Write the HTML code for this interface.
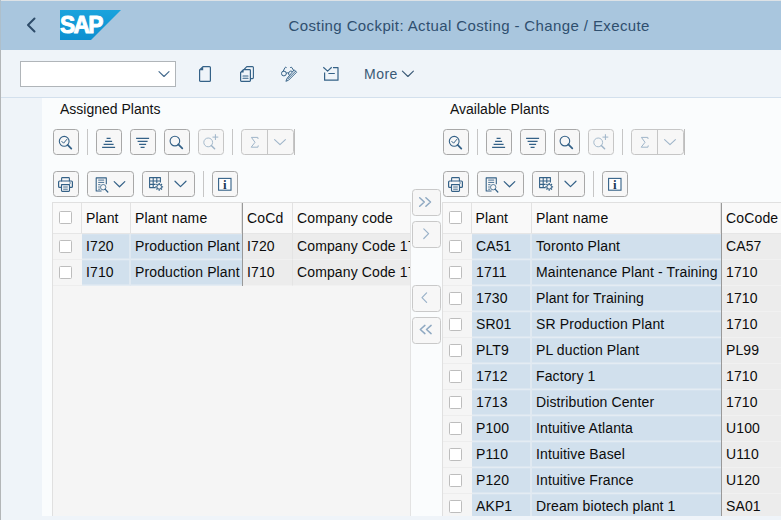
<!DOCTYPE html>
<html>
<head>
<meta charset="utf-8">
<title>Costing Cockpit: Actual Costing - Change / Execute</title>
<style>
*{box-sizing:border-box;margin:0;padding:0}
html,body{width:781px;height:520px;overflow:hidden}
body{position:relative;background:#eff4f9;font-family:"Liberation Sans",sans-serif;font-size:14px;color:#32363a}
.abs{position:absolute}
#hdr{left:0;top:0;width:781px;height:50px;background:#a9c6de}
#topline{left:0;top:0;width:781px;height:1px;background:#dde2e6}
#leftline{left:0;top:0;width:1px;height:520px;background:linear-gradient(#aebfcb 0,#aebfcb 50px,#b3b6b8 50px)}
#title{left:288.5px;top:15.5px;font-size:15px;line-height:20px;color:#2f4f6f;white-space:nowrap;letter-spacing:0.39px}
#tb{left:1px;top:50px;width:780px;height:48px;background:#eff4f9;border-bottom:1px solid #d3e0ed}
#cmd{left:20px;top:61px;width:156px;height:26px;background:#fff;border:1px solid #b0b5b9}
#more{left:364px;top:65px;font-size:14px;line-height:18px;color:#3a5976;letter-spacing:0.5px}
#panel{left:42px;top:98px;width:739px;height:418px;background:#fafcfd}
.ttl{font-size:14px;line-height:18px;color:#111;white-space:nowrap}
.btn{position:absolute;height:26px;border:1px solid #a8a8a8;border-radius:3.5px;background:#f7f7f7}
.btn.dis{border-color:#c6c6c6}
.btn.lt{border-color:#c9c9c9}
.sep{position:absolute;width:1px;height:26px;background:#c6c6c6}
.dv{position:absolute;top:0;width:1px;height:24px;background:#a6a6a6}
.dis .dv{background:#c6c6c6}
.tbl{position:absolute;background:#f5f5f5;border-left:1px solid #e0e0e0;border-top:1px solid #e0e0e0;overflow:hidden}
.tbl.l{border-right:1px solid #e3e3e3}
.row{position:absolute;left:0;height:26px;width:100%}
.cell{position:absolute;top:0;height:26px;line-height:24px;white-space:nowrap;overflow:hidden;padding-left:4px;letter-spacing:0.12px;color:#0c0c0c}
.hc{position:absolute;top:0;height:30px;line-height:30px;white-space:nowrap;overflow:hidden;padding-left:4px;background:#f9f9f9;border-right:1px solid #e2e2e2;letter-spacing:0.15px;color:#0c0c0c}
.k{background:#d1e0ed;border-right:2px solid #e0e9f1;border-bottom:1px solid #e4ecf3;box-shadow:inset 0 -1px 0 #dbe6f0,inset 0 1px 0 #d6e3ef}
.g{background:#ececec;border-right:1px solid #e4e4e4;border-bottom:1px solid #f1f1f1}
.c{background:#f5f5f5;border-bottom:1px solid #ededed}
.f{padding-left:5px}
.h{padding-left:4.5px}
.kl{border-right-width:0}
.fx{position:absolute;top:0;width:1px;background:#999}
.cb{position:absolute;width:13px;height:13px;border:1px solid #bdbdbd;border-radius:1.5px;background:#fff}
svg{position:absolute;overflow:visible}
</style>
</head>
<body>
<div id="hdr" class="abs"></div>
<div id="topline" class="abs"></div>
<div id="tb" class="abs"></div>
<div id="panel" class="abs"></div>
<div id="leftline" class="abs"></div>
<svg style="left:26px;top:17px" width="10" height="16" viewBox="0 0 10 16" ><path d="M8.5 1.5 L2 8 L8.5 14.5" fill="none" stroke="#2d4b69" stroke-width="2" stroke-linecap="round" stroke-linejoin="round"/></svg>
<svg style="left:60px;top:10px" width="61" height="30" viewBox="0 0 61 30" ><defs><linearGradient id="sg" x1="0" y1="0" x2="0" y2="1"><stop offset="0" stop-color="#1aa3dd"/><stop offset="1" stop-color="#0d8fd0"/></linearGradient></defs><path d="M0 0 H61 L31 30 H0 Z" fill="url(#sg)"/><text transform="translate(0.1,23.4) scale(0.925,1)" font-family="Liberation Sans, sans-serif" font-weight="bold" font-size="24.6" fill="#fff" stroke="#fff" stroke-width="1" stroke-linejoin="round" letter-spacing="-1.9">SAP</text></svg>
<div id="title" class="abs">Costing Cockpit: Actual Costing - Change / Execute</div>
<div id="cmd" class="abs"></div>
<svg style="left:158px;top:70px" width="12" height="8" viewBox="0 0 12 8" ><path d="M1 1.6 L6 6.5 L11 1.6" fill="none" stroke="#446a8d" stroke-width="1.15" stroke-linecap="round" stroke-linejoin="round"/></svg>
<svg style="left:199px;top:66px" width="12" height="16" viewBox="0 0 12 16" ><path d="M4 0.6 H10.4 Q11.4 0.6 11.4 1.6 V14.4 Q11.4 15.4 10.4 15.4 H1.6 Q0.6 15.4 0.6 14.4 V4 Z" fill="none" stroke="#346187" stroke-width="1.2" stroke-linecap="round" stroke-linejoin="round"/><path d="M4.2 0.6 V4.2 H0.6 Z" fill="#346187"/></svg>
<svg style="left:240px;top:66px" width="14" height="16" viewBox="0 0 14 16" ><path d="M4.5 3 L6.8 0.6 H12.4 Q13.4 0.6 13.4 1.6 V11.6 Q13.4 12.6 12.4 12.6 H11" fill="none" stroke="#346187" stroke-width="1.1" stroke-linecap="round" stroke-linejoin="round"/><path d="M3.4 3.6 H9.6 Q10.4 3.6 10.4 4.4 V14.6 Q10.4 15.4 9.6 15.4 H1.4 Q0.6 15.4 0.6 14.6 V6.4 Z" fill="none" stroke="#346187" stroke-width="1.2" stroke-linecap="round" stroke-linejoin="round"/><path d="M3.6 3.6 V6.6 H0.6 Z" fill="#346187"/><path d="M3 10 H8 M3 12.3 H8" fill="none" stroke="#346187" stroke-width="1.1" stroke-linecap="round" stroke-linejoin="round"/></svg>
<svg style="left:281px;top:66px" width="16" height="16" viewBox="0 0 16 16" ><circle cx="2.9" cy="7.5" r="2.4" fill="none" stroke="#346187" stroke-width="1"/><path d="M5.3 7.1 Q6.5 6.2 7.7 7.1 M7.8 8.6 A2.5 2.5 0 0 1 11.2 5.3 M2.1 5.2 L4.1 1.5 Q4.6 0.8 5.3 1.4 M9.5 1.4 Q10.2 0.8 10.8 1.5 L12.6 4.4" fill="none" stroke="#346187" stroke-width="1.0" stroke-linecap="round" stroke-linejoin="round"/><path d="M13.5 4.1 L15.6 6.2 L7.6 14.2 L4.9 15.3 L6 12.6 Z M14.5 5.2 L6.8 12.9" fill="none" stroke="#346187" stroke-width="0.95" stroke-linecap="round" stroke-linejoin="round"/></svg>
<svg style="left:323px;top:67px" width="16" height="14" viewBox="0 0 16 14" ><path d="M0.3 0.3 L4.6 4.1 L8.7 0.3 M10 0.6 H15 V13.2 H1.6 V5.4 M5.4 6.5 H11.8" fill="none" stroke="#346187" stroke-width="1.2" stroke-linecap="butt" stroke-linejoin="round"/></svg>
<div id="more" class="abs">More</div>
<svg style="left:401px;top:70px" width="13" height="8" viewBox="0 0 13 8" ><path d="M1.4 1.1 L6.9 6.5 L12.4 1.1" fill="none" stroke="#3a5976" stroke-width="1.1" stroke-linecap="round" stroke-linejoin="round"/></svg>
<div class="abs ttl" style="left:60px;top:100px">Assigned Plants</div>
<div class="abs ttl" style="left:450px;top:100px">Available Plants</div>
<div class="btn" style="left:53px;top:129px;width:26px"></div><svg style="left:53px;top:129px" width="26" height="26" viewBox="0 0 26 26" ><circle cx="11.2" cy="12.3" r="4.9" fill="none" stroke="#346187" stroke-width="1.10"/><path d="M14.62 15.81 L18.3 19.6" fill="none" stroke="#346187" stroke-width="1.7550000000000001" stroke-linecap="round" stroke-linejoin="round"/><path d="M8.8 12.4 L10.6 14.2 L13.8 10.4" fill="none" stroke="#346187" stroke-width="1.0" stroke-linecap="round" stroke-linejoin="round"/></svg><div class="sep" style="left:87px;top:129px"></div><div class="btn" style="left:96px;top:129px;width:26px"></div><svg style="left:96px;top:129px" width="26" height="26" viewBox="0 0 26 26" ><path d="M10.6 9.4 H14.6 M9.1 12.4 H16.1 M7.6 15.4 H17.6 M6.1 18.4 H19.1" fill="none" stroke="#346187" stroke-width="1.15" stroke-linecap="butt" stroke-linejoin="round"/></svg><div class="btn" style="left:130px;top:129px;width:26px"></div><svg style="left:130px;top:129px" width="26" height="26" viewBox="0 0 26 26" ><path d="M6.1 9.4 H19.1 M7.6 12.4 H17.6 M9.1 15.4 H16.1 M10.6 18.4 H14.6" fill="none" stroke="#346187" stroke-width="1.15" stroke-linecap="butt" stroke-linejoin="round"/></svg><div class="btn" style="left:164px;top:129px;width:26px"></div><svg style="left:164px;top:129px" width="26" height="26" viewBox="0 0 26 26" ><circle cx="10.9" cy="12.1" r="4.8" fill="none" stroke="#346187" stroke-width="1.10"/><path d="M14.34 15.45 L18.3 19.3" fill="none" stroke="#346187" stroke-width="1.7550000000000001" stroke-linecap="round" stroke-linejoin="round"/></svg><div class="btn dis" style="left:198px;top:129px;width:26px"></div><svg style="left:198px;top:129px" width="26" height="26" viewBox="0 0 26 26" ><circle cx="10.2" cy="13.4" r="4.4" fill="none" stroke="#9fb5c9" stroke-width="0.94"/><path d="M13.31 16.51 L16.6 19.8" fill="none" stroke="#9fb5c9" stroke-width="1.4850000000000003" stroke-linecap="round" stroke-linejoin="round"/><path d="M17.4 5.6 V10.6 M14.9 8.1 H19.9" fill="none" stroke="#9fb5c9" stroke-width="1.0" stroke-linecap="round" stroke-linejoin="round"/></svg><div class="sep" style="left:232px;top:129px"></div><div class="btn dis" style="left:241px;top:129px;width:53px"><div class="dv" style="left:25px"></div></div><svg style="left:241px;top:129px" width="53" height="26" viewBox="0 0 53 26" ><path d="M17 9.6 L16.8 8.4 H10.4 L14 13.3 L10.2 18.2 H16.9 L17.2 16.8" fill="none" stroke="#9fb5c9" stroke-width="1.0" stroke-linecap="round" stroke-linejoin="round"/><path d="M33.6 10.6 L39 15.6 L44.4 10.6" fill="none" stroke="#9fb5c9" stroke-width="1.1" stroke-linecap="round" stroke-linejoin="round"/></svg><div class="sep" style="left:294px;top:129px;background:#bdbdbd"></div><div class="btn" style="left:53px;top:171px;width:26px"></div><svg style="left:53px;top:171px" width="26" height="26" viewBox="0 0 26 26" ><path d="M8.6 10 V7.4 Q8.6 6.6 9.4 6.6 H15.6 Q16.4 6.6 16.4 7.4 V10" fill="none" stroke="#346187" stroke-width="1.1" stroke-linecap="round" stroke-linejoin="round"/><path d="M8.4 16.4 H6.6 Q5.6 16.4 5.6 15.4 V11 Q5.6 10 6.6 10 H18.4 Q19.4 10 19.4 11 V15.4 Q19.4 16.4 18.4 16.4 H16.6" fill="none" stroke="#346187" stroke-width="1.2" stroke-linecap="round" stroke-linejoin="round"/><path d="M8.5 13.6 H16.5 V19.6 Q16.5 20.4 15.7 20.4 H9.3 Q8.5 20.4 8.5 19.6 Z" fill="none" stroke="#346187" stroke-width="1.1" stroke-linecap="round" stroke-linejoin="round"/><path d="M10.6 16 H14.4 M10.6 18.2 H14.4 M16.6 12 H17.6" fill="none" stroke="#346187" stroke-width="0.9" stroke-linecap="round" stroke-linejoin="round"/></svg><div class="btn" style="left:87px;top:171px;width:47px"></div><svg style="left:87px;top:171px" width="47" height="26" viewBox="0 0 47 26" ><path d="M14.6 20 H9.2 V6.9 H19.3 V13.2" fill="none" stroke="#346187" stroke-width="1.1" stroke-linecap="butt" stroke-linejoin="round"/><path d="M11.2 9.1 H17.2 M11.2 11.4 H17.2 M11.2 13.7 H13.4 M11.2 16 H12.8 M11.2 18.2 H13.2" fill="none" stroke="#346187" stroke-width="0.9" stroke-linecap="butt" stroke-linejoin="round"/><circle cx="16.2" cy="16.2" r="2.7" fill="none" stroke="#346187" stroke-width="0.81"/><path d="M18.07 18.15 L20.8 21" fill="none" stroke="#346187" stroke-width="1.2825" stroke-linecap="round" stroke-linejoin="round"/><path d="M27.2 10.6 L32.5 15.8 L37.8 10.6" fill="none" stroke="#346187" stroke-width="1.2" stroke-linecap="round" stroke-linejoin="round"/></svg><div class="btn" style="left:142px;top:171px;width:53px"><div class="dv" style="left:25px"></div></div><svg style="left:142px;top:171px" width="53" height="26" viewBox="0 0 53 26" ><path d="M13.6 16.6 H7.6 V6.6 H18.4 V11.6 M7.6 10 H18.4 M7.6 13.4 H13.6 M11.2 6.6 V16.6 M14.8 6.6 V12" fill="none" stroke="#346187" stroke-width="1.1" stroke-linecap="butt" stroke-linejoin="round"/><circle cx="17.2" cy="15.8" r="2.3" fill="#f7f7f7" stroke="#346187" stroke-width="1.0"/><path d="M19.60 15.80 L21.10 15.80 M18.90 17.50 L19.96 18.56 M17.20 18.20 L17.20 19.70 M15.50 17.50 L14.44 18.56 M14.80 15.80 L13.30 15.80 M15.50 14.10 L14.44 13.04 M17.20 13.40 L17.20 11.90 M18.90 14.10 L19.96 13.04 " fill="none" stroke="#346187" stroke-width="1.3" stroke-linecap="butt" stroke-linejoin="round"/><path d="M33 10.2 L38.5 15.6 L44 10.2" fill="none" stroke="#346187" stroke-width="1.2" stroke-linecap="round" stroke-linejoin="round"/></svg><div class="sep" style="left:203px;top:171px"></div><div class="btn" style="left:212px;top:171px;width:26px"></div><svg style="left:212px;top:171px" width="26" height="26" viewBox="0 0 26 26" ><rect x="6.6" y="7.4" width="12.4" height="11.8" fill="#fff" stroke="#346187" stroke-width="1.1"/><text x="12.9" y="17.6" text-anchor="middle" font-family="Liberation Serif, serif" font-weight="bold" font-size="13" fill="#1c3a57">i</text></svg>
<div class="btn" style="left:443px;top:129px;width:26px"></div><svg style="left:443px;top:129px" width="26" height="26" viewBox="0 0 26 26" ><circle cx="11.2" cy="12.3" r="4.9" fill="none" stroke="#346187" stroke-width="1.10"/><path d="M14.62 15.81 L18.3 19.6" fill="none" stroke="#346187" stroke-width="1.7550000000000001" stroke-linecap="round" stroke-linejoin="round"/><path d="M8.8 12.4 L10.6 14.2 L13.8 10.4" fill="none" stroke="#346187" stroke-width="1.0" stroke-linecap="round" stroke-linejoin="round"/></svg><div class="sep" style="left:477px;top:129px"></div><div class="btn" style="left:486px;top:129px;width:26px"></div><svg style="left:486px;top:129px" width="26" height="26" viewBox="0 0 26 26" ><path d="M10.6 9.4 H14.6 M9.1 12.4 H16.1 M7.6 15.4 H17.6 M6.1 18.4 H19.1" fill="none" stroke="#346187" stroke-width="1.15" stroke-linecap="butt" stroke-linejoin="round"/></svg><div class="btn" style="left:520px;top:129px;width:26px"></div><svg style="left:520px;top:129px" width="26" height="26" viewBox="0 0 26 26" ><path d="M6.1 9.4 H19.1 M7.6 12.4 H17.6 M9.1 15.4 H16.1 M10.6 18.4 H14.6" fill="none" stroke="#346187" stroke-width="1.15" stroke-linecap="butt" stroke-linejoin="round"/></svg><div class="btn" style="left:554px;top:129px;width:26px"></div><svg style="left:554px;top:129px" width="26" height="26" viewBox="0 0 26 26" ><circle cx="10.9" cy="12.1" r="4.8" fill="none" stroke="#346187" stroke-width="1.10"/><path d="M14.34 15.45 L18.3 19.3" fill="none" stroke="#346187" stroke-width="1.7550000000000001" stroke-linecap="round" stroke-linejoin="round"/></svg><div class="btn dis" style="left:588px;top:129px;width:26px"></div><svg style="left:588px;top:129px" width="26" height="26" viewBox="0 0 26 26" ><circle cx="10.2" cy="13.4" r="4.4" fill="none" stroke="#9fb5c9" stroke-width="0.94"/><path d="M13.31 16.51 L16.6 19.8" fill="none" stroke="#9fb5c9" stroke-width="1.4850000000000003" stroke-linecap="round" stroke-linejoin="round"/><path d="M17.4 5.6 V10.6 M14.9 8.1 H19.9" fill="none" stroke="#9fb5c9" stroke-width="1.0" stroke-linecap="round" stroke-linejoin="round"/></svg><div class="sep" style="left:622px;top:129px"></div><div class="btn dis" style="left:631px;top:129px;width:53px"><div class="dv" style="left:25px"></div></div><svg style="left:631px;top:129px" width="53" height="26" viewBox="0 0 53 26" ><path d="M17 9.6 L16.8 8.4 H10.4 L14 13.3 L10.2 18.2 H16.9 L17.2 16.8" fill="none" stroke="#9fb5c9" stroke-width="1.0" stroke-linecap="round" stroke-linejoin="round"/><path d="M33.6 10.6 L39 15.6 L44.4 10.6" fill="none" stroke="#9fb5c9" stroke-width="1.1" stroke-linecap="round" stroke-linejoin="round"/></svg><div class="sep" style="left:684px;top:129px;background:#bdbdbd"></div><div class="btn" style="left:443px;top:171px;width:26px"></div><svg style="left:443px;top:171px" width="26" height="26" viewBox="0 0 26 26" ><path d="M8.6 10 V7.4 Q8.6 6.6 9.4 6.6 H15.6 Q16.4 6.6 16.4 7.4 V10" fill="none" stroke="#346187" stroke-width="1.1" stroke-linecap="round" stroke-linejoin="round"/><path d="M8.4 16.4 H6.6 Q5.6 16.4 5.6 15.4 V11 Q5.6 10 6.6 10 H18.4 Q19.4 10 19.4 11 V15.4 Q19.4 16.4 18.4 16.4 H16.6" fill="none" stroke="#346187" stroke-width="1.2" stroke-linecap="round" stroke-linejoin="round"/><path d="M8.5 13.6 H16.5 V19.6 Q16.5 20.4 15.7 20.4 H9.3 Q8.5 20.4 8.5 19.6 Z" fill="none" stroke="#346187" stroke-width="1.1" stroke-linecap="round" stroke-linejoin="round"/><path d="M10.6 16 H14.4 M10.6 18.2 H14.4 M16.6 12 H17.6" fill="none" stroke="#346187" stroke-width="0.9" stroke-linecap="round" stroke-linejoin="round"/></svg><div class="btn" style="left:477px;top:171px;width:47px"></div><svg style="left:477px;top:171px" width="47" height="26" viewBox="0 0 47 26" ><path d="M14.6 20 H9.2 V6.9 H19.3 V13.2" fill="none" stroke="#346187" stroke-width="1.1" stroke-linecap="butt" stroke-linejoin="round"/><path d="M11.2 9.1 H17.2 M11.2 11.4 H17.2 M11.2 13.7 H13.4 M11.2 16 H12.8 M11.2 18.2 H13.2" fill="none" stroke="#346187" stroke-width="0.9" stroke-linecap="butt" stroke-linejoin="round"/><circle cx="16.2" cy="16.2" r="2.7" fill="none" stroke="#346187" stroke-width="0.81"/><path d="M18.07 18.15 L20.8 21" fill="none" stroke="#346187" stroke-width="1.2825" stroke-linecap="round" stroke-linejoin="round"/><path d="M27.2 10.6 L32.5 15.8 L37.8 10.6" fill="none" stroke="#346187" stroke-width="1.2" stroke-linecap="round" stroke-linejoin="round"/></svg><div class="btn" style="left:532px;top:171px;width:53px"><div class="dv" style="left:25px"></div></div><svg style="left:532px;top:171px" width="53" height="26" viewBox="0 0 53 26" ><path d="M13.6 16.6 H7.6 V6.6 H18.4 V11.6 M7.6 10 H18.4 M7.6 13.4 H13.6 M11.2 6.6 V16.6 M14.8 6.6 V12" fill="none" stroke="#346187" stroke-width="1.1" stroke-linecap="butt" stroke-linejoin="round"/><circle cx="17.2" cy="15.8" r="2.3" fill="#f7f7f7" stroke="#346187" stroke-width="1.0"/><path d="M19.60 15.80 L21.10 15.80 M18.90 17.50 L19.96 18.56 M17.20 18.20 L17.20 19.70 M15.50 17.50 L14.44 18.56 M14.80 15.80 L13.30 15.80 M15.50 14.10 L14.44 13.04 M17.20 13.40 L17.20 11.90 M18.90 14.10 L19.96 13.04 " fill="none" stroke="#346187" stroke-width="1.3" stroke-linecap="butt" stroke-linejoin="round"/><path d="M33 10.2 L38.5 15.6 L44 10.2" fill="none" stroke="#346187" stroke-width="1.2" stroke-linecap="round" stroke-linejoin="round"/></svg><div class="sep" style="left:593px;top:171px"></div><div class="btn" style="left:602px;top:171px;width:26px"></div><svg style="left:602px;top:171px" width="26" height="26" viewBox="0 0 26 26" ><rect x="6.6" y="7.4" width="12.4" height="11.8" fill="#fff" stroke="#346187" stroke-width="1.1"/><text x="12.9" y="17.6" text-anchor="middle" font-family="Liberation Serif, serif" font-weight="bold" font-size="13" fill="#1c3a57">i</text></svg>
<div class="btn lt" style="left:412px;top:189px;width:29px;height:26.6px"></div><svg style="left:412px;top:189px" width="29" height="26" viewBox="0 0 29 26" ><path d="M7.7 8.8 L12.3 13 L7.7 17.2 M13.9 8.8 L18.5 13 L13.9 17.2" fill="none" stroke="#8fa9c2" stroke-width="1.5" stroke-linecap="round" stroke-linejoin="round"/></svg>
<div class="btn lt" style="left:412px;top:221.3px;width:29px;height:26.6px"></div><svg style="left:412px;top:221.3px" width="29" height="26" viewBox="0 0 29 26" ><path d="M11.8 7.9 L16.6 12.7 L11.8 17.5" fill="none" stroke="#9ab2c9" stroke-width="1.2" stroke-linecap="round" stroke-linejoin="round"/></svg>
<div class="btn lt" style="left:412px;top:285.3px;width:29px;height:26.6px"></div><svg style="left:412px;top:285.3px" width="29" height="26" viewBox="0 0 29 26" ><path d="M14.6 7.9 L10 12.6 L14.6 17.3" fill="none" stroke="#9ab2c9" stroke-width="1.2" stroke-linecap="round" stroke-linejoin="round"/></svg>
<div class="btn lt" style="left:412px;top:317.3px;width:29px;height:26.6px"></div><svg style="left:412px;top:317.3px" width="29" height="26" viewBox="0 0 29 26" ><path d="M19.1 8.4 L14.5 12.5 L19.1 16.6 M12.9 8.4 L8.3 12.5 L12.9 16.6" fill="none" stroke="#8fa9c2" stroke-width="1.5" stroke-linecap="round" stroke-linejoin="round"/></svg>
<div class="tbl l" style="left:52px;top:202px;width:359px;height:314px"><div class="row" style="top:0;height:31px;background:#e6e6e6"><div class="hc" style="left:0px;width:29px"><div class="cb" style="left:6px;top:8px"></div></div><div class="hc" style="left:29px;width:49px">Plant</div><div class="hc" style="left:78px;width:111px">Plant name</div><div class="hc f" style="left:189px;width:51px">CoCd</div><div class="hc" style="left:240px;width:118px">Company code</div></div><div class="row" style="top:31px"><div class="cell c" style="left:0px;width:29px"><div class="cb" style="left:6px;top:6px"></div></div><div class="cell k" style="left:29px;width:49px">I720</div><div class="cell k kl" style="left:78px;width:111px">Production Plant</div><div class="cell g f" style="left:189px;width:51px">I720</div><div class="cell g" style="left:240px;width:118px">Company Code 1720</div></div><div class="row" style="top:57px"><div class="cell c" style="left:0px;width:29px"><div class="cb" style="left:6px;top:6px"></div></div><div class="cell k" style="left:29px;width:49px">I710</div><div class="cell k kl" style="left:78px;width:111px">Production Plant</div><div class="cell g f" style="left:189px;width:51px">I710</div><div class="cell g" style="left:240px;width:118px">Company Code 1710</div></div><div class="fx" style="left:189px;height:83px"></div></div>
<div class="tbl" style="left:442px;top:202px;width:339px;height:314px"><div class="row" style="top:0;height:31px;background:#e6e6e6"><div class="hc" style="left:0px;width:29px"><div class="cb" style="left:6px;top:8px"></div></div><div class="hc" style="left:28.5px;width:60.5px">Plant</div><div class="hc" style="left:89px;width:189px">Plant name</div><div class="hc f" style="left:278px;width:61px">CoCode</div></div><div class="row" style="top:31px"><div class="cell c" style="left:0px;width:29px"><div class="cb" style="left:6px;top:6px"></div></div><div class="cell k h" style="left:28.5px;width:60.5px">CA51</div><div class="cell k kl" style="left:89px;width:189px">Toronto Plant</div><div class="cell g f" style="left:278px;width:61px">CA57</div></div><div class="row" style="top:57px"><div class="cell c" style="left:0px;width:29px"><div class="cb" style="left:6px;top:6px"></div></div><div class="cell k h" style="left:28.5px;width:60.5px">1711</div><div class="cell k kl" style="left:89px;width:189px">Maintenance Plant - Training</div><div class="cell g f" style="left:278px;width:61px">1710</div></div><div class="row" style="top:83px"><div class="cell c" style="left:0px;width:29px"><div class="cb" style="left:6px;top:6px"></div></div><div class="cell k h" style="left:28.5px;width:60.5px">1730</div><div class="cell k kl" style="left:89px;width:189px">Plant for Training</div><div class="cell g f" style="left:278px;width:61px">1710</div></div><div class="row" style="top:109px"><div class="cell c" style="left:0px;width:29px"><div class="cb" style="left:6px;top:6px"></div></div><div class="cell k h" style="left:28.5px;width:60.5px">SR01</div><div class="cell k kl" style="left:89px;width:189px">SR Production Plant</div><div class="cell g f" style="left:278px;width:61px">1710</div></div><div class="row" style="top:135px"><div class="cell c" style="left:0px;width:29px"><div class="cb" style="left:6px;top:6px"></div></div><div class="cell k h" style="left:28.5px;width:60.5px">PLT9</div><div class="cell k kl" style="left:89px;width:189px">PL duction Plant</div><div class="cell g f" style="left:278px;width:61px">PL99</div></div><div class="row" style="top:161px"><div class="cell c" style="left:0px;width:29px"><div class="cb" style="left:6px;top:6px"></div></div><div class="cell k h" style="left:28.5px;width:60.5px">1712</div><div class="cell k kl" style="left:89px;width:189px">Factory 1</div><div class="cell g f" style="left:278px;width:61px">1710</div></div><div class="row" style="top:187px"><div class="cell c" style="left:0px;width:29px"><div class="cb" style="left:6px;top:6px"></div></div><div class="cell k h" style="left:28.5px;width:60.5px">1713</div><div class="cell k kl" style="left:89px;width:189px">Distribution Center</div><div class="cell g f" style="left:278px;width:61px">1710</div></div><div class="row" style="top:213px"><div class="cell c" style="left:0px;width:29px"><div class="cb" style="left:6px;top:6px"></div></div><div class="cell k h" style="left:28.5px;width:60.5px">P100</div><div class="cell k kl" style="left:89px;width:189px">Intuitive Atlanta</div><div class="cell g f" style="left:278px;width:61px">U100</div></div><div class="row" style="top:239px"><div class="cell c" style="left:0px;width:29px"><div class="cb" style="left:6px;top:6px"></div></div><div class="cell k h" style="left:28.5px;width:60.5px">P110</div><div class="cell k kl" style="left:89px;width:189px">Intuitive Basel</div><div class="cell g f" style="left:278px;width:61px">U110</div></div><div class="row" style="top:265px"><div class="cell c" style="left:0px;width:29px"><div class="cb" style="left:6px;top:6px"></div></div><div class="cell k h" style="left:28.5px;width:60.5px">P120</div><div class="cell k kl" style="left:89px;width:189px">Intuitive France</div><div class="cell g f" style="left:278px;width:61px">U120</div></div><div class="row" style="top:291px"><div class="cell c" style="left:0px;width:29px"><div class="cb" style="left:6px;top:6px"></div></div><div class="cell k h" style="left:28.5px;width:60.5px">AKP1</div><div class="cell k kl" style="left:89px;width:189px">Dream biotech plant 1</div><div class="cell g f" style="left:278px;width:61px">SA01</div></div><div class="fx" style="left:278px;height:317px"></div></div>
</body>
</html>
